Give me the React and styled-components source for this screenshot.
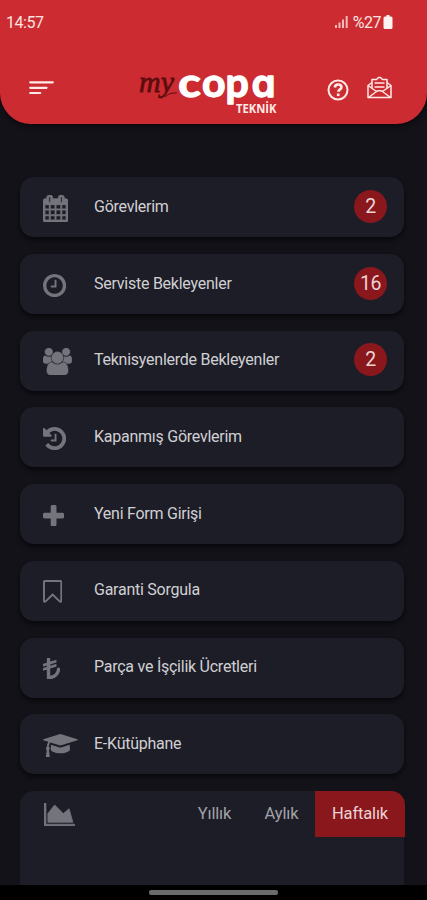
import React from "react";
import styled, { createGlobalStyle } from "styled-components";

const GlobalStyle = createGlobalStyle`
  * { box-sizing: border-box; }
  body { margin: 0; background: #131219; font-family: Roboto, "Open Sans", sans-serif; }
`;

const Screen = styled.div`
  width: 100%;
  height: 900px;
  overflow: hidden;
  display: flex;
  flex-direction: column;
  background: #131219;
`;

const Header = styled.header`
  flex: none;
  height: 124px;
  border-radius: 0 0 31px 31px;
  background: #cc2c31;
  box-shadow: 0 2px 5px #09090d;
  color: #fbe3e2;
`;

const StatusBar = styled.div`
  height: 44px;
  padding: 0 34px 0 6px;
  display: flex;
  align-items: center;
  justify-content: space-between;
  font-size: 16px;
  letter-spacing: -0.45px;
`;

const StatusGroup = styled.div`
  display: flex;
  align-items: center;
  svg { display: block; }
  span { margin: 0 2px 0 5px; }
`;

const AppBar = styled.div`
  height: 80px;
  padding: 0 34px 0 28px;
  display: flex;
  align-items: flex-start;
`;

const IconButton = styled.button`
  flex: none;
  display: flex;
  padding: 0;
  border: 0;
  background: none;
  color: #ffe9e6;
  margin: ${(p) => p.$margin};
`;

const Logo = styled.div`
  display: flex;
  margin: 18px 0 0 83px;
  width: 142px;
  svg { overflow: visible; }
`;

const Menu = styled.main`
  flex: 1;
  min-height: 0;
  padding: 53.4px 23px 0 20px;
  display: flex;
  flex-direction: column;
  gap: 16.7px;
`;

const Row = styled.div`
  flex: none;
  height: 60px;
  display: flex;
  align-items: center;
  padding: 0 17px 2px 23px;
  border-radius: 14px;
  background: #1d1d27;
  box-shadow: 0 3px 4px #08080c;
`;

const IconSlot = styled.div`
  flex: none;
  width: 51px;
  display: flex;
  align-items: center;
  color: #74747c;
  padding-top: 4px;
`;

const Label = styled.span`
  flex: 1;
  font-size: 16px;
  letter-spacing: -0.25px;
  color: #d0d0d3;
  white-space: nowrap;
`;

const Badge = styled.span`
  width: 33px;
  height: 33px;
  border-radius: 50%;
  display: flex;
  align-items: center;
  justify-content: center;
  background: #89171c;
  color: #ecd3d4;
  font-size: 19.5px;
  letter-spacing: -0.5px;
`;

const ChartCard = styled.section`
  flex: 1;
  min-height: 0;
  border-radius: 14px 14px 0 0;
  background: #1d1d27;
`;

const ChartHeader = styled.div`
  display: flex;
  height: 46px;
  padding-left: 24px;
  margin-right: -1px;
`;

const ChartIcon = styled.div`
  flex: 1;
  padding-top: 12px;
  color: #74747c;
`;

const Tab = styled.button`
  width: ${(p) => p.$width}px;
  padding: 0;
  border: 0;
  border-radius: ${(p) => (p.$active ? "0 14px 0 0" : "0")};
  background: ${(p) => (p.$active ? "#89171c" : "transparent")};
  color: ${(p) => (p.$active ? "#ecd3d4" : "#a2a2a8")};
  font-family: inherit;
  font-size: 16.5px;
  letter-spacing: -0.15px;
`;

const NavBar = styled.footer`
  flex: none;
  height: 15px;
  display: flex;
  justify-content: center;
  padding-top: 5px;
  background: #000;
`;

const HomeHandle = styled.div`
  width: 129px;
  height: 5px;
  border-radius: 2px;
  background: #6b6b6b;
`;

// Menu glyphs share a 1792-unit em; each box is cropped to its own shape.
const GLYPHS = {
  calendar: {
    box: [64, 0, 1664, 1792],
    d: "M192 1664h288v-288h-288v288zm352 0h320v-288h-320v288zm-352-352h288v-320h-288v320zm352 0h320v-320h-320v320zm-352-384h288v-288h-288v288zm736 736h320v-288h-320v288zm-384-736h320v-288h-320v288zm768 736h288v-288h-288v288zm-384-352h320v-320h-320v320zm-352-864v-288q0-13-9.500-22.500t-22.500-9.500h-64q-13 0-22.500 9.500t-9.500 22.500v288q0 13 9.500 22.500t22.500 9.500h64q13 0 22.500-9.500t9.500-22.500zm736 864h288v-320h-288v320zm-384-384h320v-288h-320v288zm384 0h288v-288h-288v288zm32-480v-288q0-13-9.500-22.500t-22.500-9.500h-64q-13 0-22.500 9.500t-9.500 22.500v288q0 13 9.500 22.500t22.500 9.500h64q13 0 22.500-9.500t9.500-22.500zm384-64v1280q0 52-38 90t-90 38h-1408q-52 0-90-38t-38-90v-1280q0-52 38-90t90-38h128v-96q0-66 47-113t113-47h64q66 0 113 47t47 113v96h384v-96q0-66 47-113t113-47h64q66 0 113 47t47 113v96h128q52 0 90 38t38 90z",
    outline: 60,
  },
  clock: {
    box: [128, 128, 1536, 1536],
    d: "M1024 544v448q0 14-9 23t-23 9h-320q-14 0-23-9t-9-23v-64q0-14 9-23t23-9h224v-352q0-14 9-23t23-9h64q14 0 23 9t9 23zm416 352q0-148-73-273t-198-198-273-73-273 73-198 198-73 273 73 273 198 198 273 73 273-73 198-198 73-273zm224 0q0 209-103 385.500t-279.500 279.500-385.500 103-385.500-103-279.500-279.500-103-385.500 103-385.500 279.500-279.500 385.500-103 385.500 103 279.500 279.500 103 385.500z",
  },
  users: {
    box: [0, 0, 1920, 1792],
    d: "M593 896q-162 5-265 128h-134q-82 0-138-40.500t-56-118.500q0-353 124-353 6 0 43.500 21t97.500 42.500 119 21.500q67 0 133-23-5 37-5 66 0 139 81 256zm1071 637q0 120-73 189.500t-194 69.500h-874q-121 0-194-69.500t-73-189.500q0-53 3.500-103.500t14-109 26.500-108.500 43-97.500 62-81 85.500-53.500 111.500-20q10 0 43 21.500t73 48 107 48 135 21.500 135-21.500 107-48 73-48 43-21.500q61 0 111.500 20t85.500 53.500 62 81 43 97.500 26.500 108.500 14 109 3.500 103.500zm-1024-1277q0 106-75 181t-181 75-181-75-75-181 75-181 181-75 181 75 75 181zm704 384q0 159-112.500 271.500t-271.500 112.500-271.500-112.500-112.500-271.500 112.500-271.500 271.500-112.500 271.500 112.500 112.500 271.500zm576 225q0 78-56 118.500t-138 40.500h-134q-103-123-265-128 81-117 81-256 0-29-5-66 66 23 133 23 59 0 119-21.500t97.500-42.500 43.500-21q124 0 124 353zm-128-609q0 106-75 181t-181 75-181-75-75-181 75-181 181-75 181 75 75 181z",
    outline: 35,
  },
  history: {
    box: [128, 128, 1536, 1536],
    d: "M1664 896q0 156-61 298t-164 245-245 164-298 61q-172 0-327-72.500t-264-204.500q-7-10-6.500-22.500t8.500-20.500l137-138q10-9 25-9 16 2 23 12 73 95 179 147t225 52q104 0 198.500-40.500t163.500-109.500 109.500-163.500 40.500-198.500-40.500-198.500-109.500-163.500-163.500-109.500-198.500-40.500q-98 0-188 35.500t-160 101.500l137 138q31 30 14 69-17 40-59 40h-448q-26 0-45-19t-19-45v-448q0-42 40-59 39-17 69 14l130 129q107-101 244.500-156.500t284.500-55.500q156 0 298 61t245 164 164 245 61 298zm-640-288v448q0 14-9 23t-23 9h-320q-14 0-23-9t-9-23v-64q0-14 9-23t23-9h224v-352q0-14 9-23t23-9h64q14 0 23 9t9 23z",
  },
  plus: {
    box: [192, 128, 1408, 1408],
    d: "M1600 736v192q0 40-28 68t-68 28h-416v416q0 40-28 68t-68 28h-192q-40 0-68-28t-28-68v-416h-416q-40 0-68-28t-28-68v-192q0-40 28-68t68-28h416v-416q0-40 28-68t68-28h192q40 0 68 28t28 68v416h416q40 0 68 28t28 68z",
  },
  bookmark: {
    box: [0, 0, 1280, 1536],
    d: "M1152 128H128v1242l423-406 89-85 89 85 423 406zM1164 0q23 0 44 9 33 13 52.500 41t19.500 62v1289q0 34-19.500 62t-52.500 41q-19 8-44 8-48 0-83-32l-441-424-441 424q-36 33-83 33-23 0-44-9-33-13-52.500-41T0 1401V112q0-34 19.500-62T72 9q21-9 44-9z",
  },
  lira: {
    box: [0, 0, 1152, 1408],
    d: "M1120 640q32 0 32 32 0 305-216 520T416 1408H288q-32 0-32-32V772L40 838q-40 8-40-30V690q0-24 23-31l233-72v-93L40 560q-40 8-40-30V412q0-24 23-31l233-72V32q0-32 32-32h160q32 0 32 32v208l375-115q41-8 41 31v118q0 24-23 31L480 425v93l375-115q41-8 41 31v118q0 24-23 31L480 703v476q190-12 321-151t131-356q0-32 32-32z",
  },
  cap: {
    box: [0, 128, 2304, 1536],
    d: "M1774 836l18 316q4 69-82 128t-235 93.500-323 34.500-323-34.500-235-93.500-82-128l18-316 574 181q22 7 48 7t48-7zm530-324q0 23-22 31l-1120 352q-4 1-10 1t-10-1l-652-206q-43 34-71 111.500t-34 178.500q63 36 63 109 0 69-58 107l58 433q2 14-8 25-9 11-24 11h-192q-15 0-24-11-10-11-8-25l58-433q-58-38-58-107 0-73 65-111 11-207 98-330l-333-104q-22-8-22-31t22-31l1120-352q4-1 10-1t10 1l1120 352q22 8 22 31z",
  },
  chart: {
    box: [0, 128, 2048, 1536],
    d: "M2048 1536v128h-2048v-1536h128v1408h1920zm-384-1024l256 896h-1664v-576l448-576 576 576z",
    outline: 50,
  },
};

function Glyph({ name }) {
  const { box, d, outline = 0 } = GLYPHS[name];
  const scale = 27 / 1792;
  return (
    <svg width={box[2] * scale} height={box[3] * scale} viewBox={box.join(" ")} fill="currentColor" stroke="currentColor" strokeWidth={outline}>
      <path d={d} />
    </svg>
  );
}

const ITEMS = [
  { icon: "calendar", label: "Görevlerim", count: 2 },
  { icon: "clock", label: "Serviste Bekleyenler", count: 16 },
  { icon: "users", label: "Teknisyenlerde Bekleyenler", count: 2 },
  { icon: "history", label: "Kapanmış Görevlerim" },
  { icon: "plus", label: "Yeni Form Girişi" },
  { icon: "bookmark", label: "Garanti Sorgula" },
  { icon: "lira", label: "Parça ve İşçilik Ücretleri" },
  { icon: "cap", label: "E-Kütüphane" },
];

const Wordmark = styled.text`
  font-family: Lato, sans-serif;
  font-weight: 700;
  font-size: 41px;
  fill: #fff;
  stroke: #fff;
  stroke-width: 1.3px;
  stroke-linejoin: round;
`;

// Inter's cv11 alternate is a single-storey "a".
const RoundA = styled.tspan`
  font-family: Inter, sans-serif;
  font-weight: 600;
  font-size: 38.5px;
  font-feature-settings: "cv11";
`;

const ScriptMark = styled.text`
  font-family: "Liberation Serif", serif;
  font-style: italic;
  font-size: 30px;
  fill: #5e0c0f;
  stroke: #5e0c0f;
  stroke-width: 0.8px;
`;

const Tagline = styled.text`
  font-family: "Open Sans", sans-serif;
  font-weight: 700;
  font-size: 12px;
  fill: #ffe9e6;
`;

function BrandLogo() {
  return (
    <svg width="142" height="56" viewBox="0 0 142 56">
      <ScriptMark x="1" y="30" textLength="35" lengthAdjust="spacingAndGlyphs">my</ScriptMark>
      <path d="M27 35c4-4 7-4 12-4" fill="none" stroke="#5e0c0f" strokeWidth="1" />
      <g transform="translate(40.200 0) scale(1.140 1)">
        <Wordmark x="0" y="35.300">c</Wordmark>
      </g>
      <Wordmark x="64" y="35.300">
        o<tspan x="87.500">p</tspan><RoundA x="113.500">a</RoundA>
      </Wordmark>
      <Tagline x="98" y="51" textLength="40.500" lengthAdjust="spacingAndGlyphs">TEKNİK</Tagline>
    </svg>
  );
}

export default function App() {
  return (
    <>
      <GlobalStyle />
      <Screen>
        <Header>
          <StatusBar>
            <time>14:57</time>
            <StatusGroup>
              <svg width="13" height="12" viewBox="0 0 13 12" fill="#f3b9b8">
                <path d="M0 9h2v3H0zM3.500 6.500h2V12h-2zM7 3.500h2V12H7zM10.700 0h2v12h-2z" />
              </svg>
              <span>%27</span>
              <svg width="10" height="14" viewBox="0 0 9 14" fill="#fff3f1">
                <path d="M3 0h3v1.500h1.500A1.500 1.500 0 0 1 9 3v9.500A1.500 1.500 0 0 1 7.500 14h-6A1.500 1.500 0 0 1 0 12.500V3a1.500 1.500 0 0 1 1.500-1.500H3z" />
              </svg>
            </StatusGroup>
          </StatusBar>
          <AppBar>
            <IconButton $margin="36px 0 0 0" aria-label="Menü">
              <svg width="27" height="15" viewBox="0 0 27 15" fill="none" stroke="currentColor" strokeWidth="2.200" strokeLinecap="round">
                <path d="M2.200 2.300h22.600M2.200 7.800h16.300M2.200 13h10" />
              </svg>
            </IconButton>
            <Logo><BrandLogo /></Logo>
            <IconButton $margin="34px 0 0 46px" aria-label="Yardım">
              <svg width="24" height="24" viewBox="0 0 24 24" fill="none" stroke="currentColor">
                <circle cx="12" cy="12" r="9.500" strokeWidth="2" />
                <path d="M8.800 9.500c.2-2 1.600-3 3.400-3s3.200 1.100 3.200 2.700c0 2.100-3 2.200-3 4.600" strokeWidth="2.700" />
                <path d="M12.200 15.500v2.600" strokeWidth="2.700" />
              </svg>
            </IconButton>
            <IconButton $margin="32px 0 0 16px" aria-label="Mesajlar">
              <svg width="27" height="23" viewBox="0 0 27 23" fill="none" stroke="currentColor" strokeWidth="1.500" strokeLinejoin="round">
                <path d="M6 6.500 2 9.500v12h23v-12l-4-3M2 9.500l8.500 6M25 9.500l-8.500 6M2.500 21.500l8-6 1.500-.8h3l1.500.8 8 6" />
                <path d="M6 12V3.500h4.500l2-2h2l2 2H21V12M8.500 7h10M8.500 11h10" />
              </svg>
            </IconButton>
          </AppBar>
        </Header>
        <Menu>
          {ITEMS.map(({ icon, label, count }) => (
            <Row key={label}>
              <IconSlot><Glyph name={icon} /></IconSlot>
              <Label>{label}</Label>
              {count && <Badge>{count}</Badge>}
            </Row>
          ))}
          <ChartCard>
            <ChartHeader>
              <ChartIcon><Glyph name="chart" /></ChartIcon>
              <Tab $width={67}>Yıllık</Tab>
              <Tab $width={67}>Aylık</Tab>
              <Tab $width={90} $active>Haftalık</Tab>
            </ChartHeader>
          </ChartCard>
        </Menu>
        <NavBar><HomeHandle /></NavBar>
      </Screen>
    </>
  );
}
